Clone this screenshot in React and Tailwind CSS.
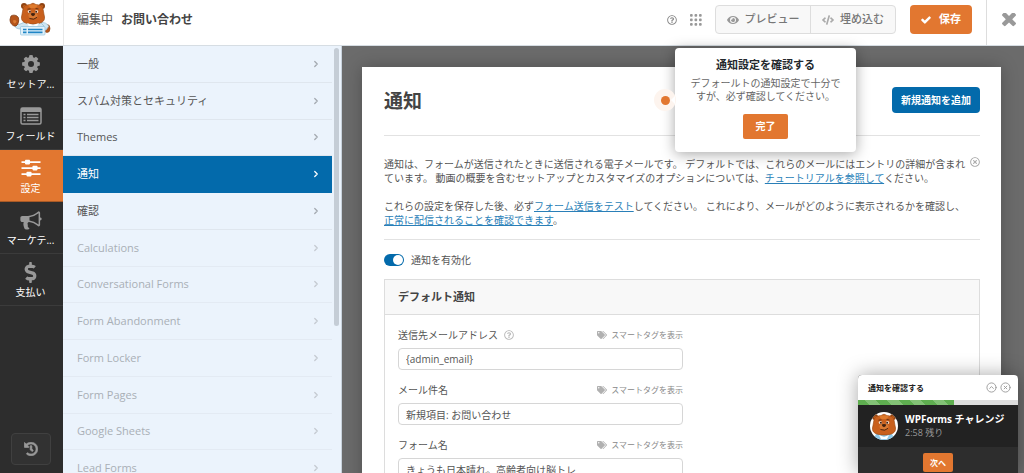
import React from "react";
import {
  FaCode,
  FaDollarSign,
  FaEye,
  FaHistory,
  FaRegQuestionCircle,
  FaRegTimesCircle,
  FaTags,
} from "react-icons/fa";
import { ChevronRight, CircleChevronUp, CircleX } from "lucide-react";

function BearHead() {
  return (
    <g>
      <circle cx="24" cy="6" r="3" fill="#8f4312" />
      <circle cx="42" cy="6" r="3" fill="#8f4312" />
      <circle cx="24.5" cy="6.5" r="1.6" fill="#c9651f" />
      <circle cx="41.5" cy="6.5" r="1.6" fill="#c9651f" />
      <path
        d="M24 6.5C26 4.5 29 5 31 4.2C32 3 34 3 35 4.2C37 5 40 4.500 42 6.500C43.500 9 43.500 13 44.500 17C45 21.500 41 24 33 24S21 21.500 21.500 17C22.500 13 22.500 9 24 6.500Z"
        fill="#c9601d"
        stroke="#a04d16"
        strokeWidth=".7"
      />
      <path d="M28 5.500C30 4 36 4 38 5.500L35.500 8H30.500Z" fill="#de7a2c" />
      <ellipse cx="33" cy="15.500" rx="4.500" ry="3" fill="#d97a33" />
      <ellipse cx="29.400" cy="11.500" rx="1.600" ry="1.500" fill="#f3e3d6" />
      <ellipse cx="36.600" cy="11.500" rx="1.600" ry="1.500" fill="#f3e3d6" />
      <circle cx="29.900" cy="11.700" r="1" fill="#40200f" />
      <circle cx="36.200" cy="11.700" r="1" fill="#40200f" />
      <path d="M27.500 9.200L30.500 8.800M35.500 8.400L38.500 9" stroke="#60300f" strokeWidth=".9" />
      <path d="M30.700 13.500Q33 12.400 35.300 13.500Q35 15.700 33 16.200Q31 15.700 30.700 13.500Z" fill="#40200f" />
      <path d="M29.500 18.500Q34 20.500 37 17.300" fill="none" stroke="#40200f" strokeWidth=".9" />
    </g>
  );
}

function Mascot({ className }) {
  return (
    <svg viewBox="9 2 42 34" className={className} aria-hidden="true">
      <ellipse cx="47" cy="28.500" rx="3" ry="4" fill="#b5551b" stroke="#8f4312" strokeWidth=".6" />
      <path d="M40 22.500C45 22 48 24 48.500 26.500L46 30H40Z" fill="#cfe6f2" stroke="#9cc4d8" strokeWidth=".7" />
      <path d="M17 24.500C20 25 22 22.500 26 22H40L44 26V33H21V29C17 29 15 27.500 14.500 25.500Z" fill="#cfe6f2" stroke="#8fb9cf" strokeWidth=".7" />
      <path
        d="M11 16C13 14.500 17 15 18.300 17.500C19.300 20.500 18.500 24.500 16 26C12.500 26.500 10 23 10 19.500Z"
        fill="#b5551b"
        stroke="#7d3a12"
        strokeWidth=".8"
      />
      <path d="M13 20.500Q14.500 19.300 16 20.500T14.500 23.500Q12.800 22.500 13 20.500Z" fill="#d97a33" />
      <BearHead />
      <path d="M27 23L33 25L39 23L37 26.500L33 25.500L29 26.500Z" fill="#fff" />
      <rect x="20.500" y="26.500" width="24.500" height="8.500" rx="1" fill="#e2f1fa" stroke="#8fc3de" strokeWidth=".7" />
      <path d="M23 29.500H26.500M28 29.500H42.500M23 32.300H26.500M28 32.300H42.500" stroke="#1f86c6" strokeWidth="1.700" />
    </svg>
  );
}

function CogIcon() {
  return (
    <svg viewBox="0 0 18 18" className="size-[18px]" aria-hidden="true">
      {[0, 45, 90, 135].map((angle) => (
        <g key={angle} transform={`rotate(${angle} 9 9)`} fill="currentColor">
          <path d="M7.300 0.300Q9 -0.100 10.700 0.300L11.300 4H6.700ZM7.300 17.700Q9 18.100 10.700 17.700L11.300 14H6.700Z" />
        </g>
      ))}
      <circle cx="9" cy="9" r="5" fill="none" stroke="currentColor" strokeWidth="4" />
    </svg>
  );
}

function ListIcon() {
  return (
    <svg viewBox="0 0 22 18" className="h-[18px] w-[22px]" fill="none" stroke="currentColor" aria-hidden="true">
      <rect x="1" y="1" width="20" height="16" rx="1.500" strokeWidth="1.500" />
      <path d="M1 3H21" strokeWidth="4" />
      <path d="M3.500 7.500H5.500M7 7.500H18.500M3.500 10.500H5.500M7 10.500H18.500M3.500 13.500H5.500M7 13.500H18.500" strokeWidth="1.600" />
    </svg>
  );
}

function SlidersIcon() {
  return (
    <svg viewBox="0 0 20 18" className="h-[18px] w-5" fill="currentColor" aria-hidden="true">
      <path d="M0.500 2.200H19.500V4H0.500ZM0.500 8.200H19.500V10H0.500ZM0.500 14.200H19.500V16H0.500Z" />
      <rect x="4" y="0.800" width="5" height="4.600" rx=".8" />
      <rect x="11.500" y="6.800" width="5" height="4.600" rx=".8" />
      <rect x="5.500" y="12.800" width="5" height="4.600" rx=".8" />
    </svg>
  );
}

function BullhornIcon() {
  return (
    <svg viewBox="0 100 1792 1600" className="h-[19px] w-[22px]" fill="currentColor" aria-hidden="true">
      <path d="M1664 640q53 0 90.500 37.500t37.500 90.500-37.500 90.500-90.500 37.500v384q0 52-38 90t-90 38q-417-347-812-380-58 19-91 66t-31 100.500 40 92.500q-20 33-23 65.500t6 58 33.500 55 48 50 61.500 50.500q-29 58-111.500 83t-168.500 11.500-132-55.500q-7-23-29.500-87.500t-32-94.500-23-89-15-101 3.500-98.500 22-110.500h-122q-66 0-113-47t-47-113v-192q0-66 47-113t113-47h480q435 0 896-384 52 0 90 38t38 90v384zm-128 604v-954q-394 302-768 343v270q377 42 768 341z" />
    </svg>
  );
}

function CheckIcon() {
  return (
    <svg viewBox="100 300 1600 1250" className="h-2 w-2.5" fill="currentColor" aria-hidden="true">
      <path d="M1671 566q0 40-28 68l-724 724-136 136q-28 28-68 28t-68-28l-136-136-362-362q-28-28-28-68t28-68l136-136q28-28 68-28t68 28l294 295 656-657q28-28 68-28t68 28l136 136q28 28 28 68z" />
    </svg>
  );
}

function CloseIcon() {
  return (
    <svg viewBox="300 434 1190 1190" className="size-[14px]" fill="currentColor" aria-hidden="true">
      <path d="M1490 1322q0 40-28 68l-136 136q-28 28-68 28t-68-28l-294-294-294 294q-28 28-68 28t-68-28l-136-136q-28-28-28-68t28-68l294-294-294-294q-28-28-28-68t28-68l136-136q28-28 68-28t68 28l294 294 294-294q28-28 68-28t68 28l136 136q28 28 28 68t-28 68l-294 294 294 294q28 28 28 68z" />
    </svg>
  );
}

function DotsIcon() {
  return (
    <svg viewBox="0 0 12 12" className="size-3" fill="currentColor" aria-hidden="true">
      {[0, 4.5, 9].map((y) =>
        [0, 4.5, 9].map((x) => <rect key={`${x}-${y}`} x={x} y={y} width="2.700" height="2.700" rx=".9" />)
      )}
    </svg>
  );
}

const NAV = [
  { label: "セットア...", icon: <CogIcon /> },
  { label: "フィールド", icon: <ListIcon /> },
  { label: "設定", icon: <SlidersIcon />, active: true },
  { label: "マーケテ...", icon: <BullhornIcon /> },
  { label: "支払い", icon: <FaDollarSign className="size-[21px]" /> },
];

const SECTIONS = [
  { label: "一般" },
  { label: "スパム対策とセキュリティ" },
  { label: "Themes" },
  { label: "通知", active: true },
  { label: "確認" },
  { label: "Calculations", muted: true },
  { label: "Conversational Forms", muted: true },
  { label: "Form Abandonment", muted: true },
  { label: "Form Locker", muted: true },
  { label: "Form Pages", muted: true },
  { label: "Google Sheets", muted: true },
  { label: "Lead Forms", muted: true },
];

const FIELDS = [
  { id: "email", label: "送信先メールアドレス", value: "{admin_email}", help: true },
  { id: "subject", label: "メール件名", value: "新規項目: お問い合わせ" },
  { id: "from", label: "フォーム名", value: "きょうも日本晴れ。高齢者向け脳トレ" },
];

function Header() {
  return (
    <header className="flex h-[46px] shrink-0 items-stretch border-b border-[#d6dde3] bg-white">
      <div className="flex w-16 shrink-0 border-r border-[#e8e8e8] pl-[9px] pt-0.5">
        <Mascot className="h-[34px] w-[42px]" />
      </div>
      <h1 className="flex flex-1 items-center gap-2 pb-1.5 pl-[13px] text-[12px] text-[#555]">
        編集中 <strong className="font-bold text-[#444]">お問い合わせ</strong>
      </h1>
      <div className="flex items-center pb-1.5 text-[11px] font-medium text-[#777]">
        <button type="button" aria-label="ヘルプ" className="mr-[13px] text-[#8c8c8c]">
          <FaRegQuestionCircle className="size-2.5" />
        </button>
        <button type="button" aria-label="メニュー" className="mr-[13px] text-[#999]">
          <DotsIcon />
        </button>
        <div className="flex h-[29px] rounded-sm border border-[#ddd] bg-[#f8f8f8]">
          <button type="button" className="flex w-[95px] items-center justify-center gap-1.5 border-r border-[#ddd]">
            <FaEye className="size-3 text-[#999]" />
            プレビュー
          </button>
          <button type="button" className="flex w-[84px] items-center justify-center gap-1.5">
            <FaCode className="size-3 text-[#aaa]" />
            埋め込む
          </button>
        </div>
        <button
          type="button"
          className="ml-3.5 flex h-[29px] w-[62px] items-center justify-center gap-2 rounded-sm bg-[#e27730] font-bold text-white"
        >
          <CheckIcon />
          保存
        </button>
      </div>
      <div className="ml-3.5 flex w-[38px] items-center justify-center border-l border-[#ddd] pb-1.5 pl-1.5">
        <button type="button" aria-label="閉じる" className="text-[#999]">
          <CloseIcon />
        </button>
      </div>
    </header>
  );
}

function Sidebar() {
  return (
    <nav className="flex w-[63px] shrink-0 flex-col bg-[#2d2d2d]">
      {NAV.map((item) => (
        <button
          key={item.label}
          type="button"
          className={`flex h-[52px] shrink-0 flex-col items-center justify-between border-b pb-[5px] pr-0.5 pt-[9px] text-[10px] leading-4 ${
            item.active ? "border-[#a95a26] bg-[#e27730] text-white" : "border-[#3b3b3b] text-[#999]"
          }`}
        >
          <span className="flex h-[18px] items-center">{item.icon}</span>
          <span className="whitespace-nowrap text-white">{item.label}</span>
        </button>
      ))}
      <button
        type="button"
        aria-label="履歴"
        className="mb-2 ml-[11px] mt-auto flex h-8 w-10 items-center justify-center rounded-sm border border-[#404040] bg-[#323232] text-[#999]"
      >
        <FaHistory className="size-3.5" stroke="currentColor" strokeWidth="24" />
      </button>
    </nav>
  );
}

function SettingsMenu() {
  return (
    <aside className="flex w-[279px] shrink-0 items-start overflow-hidden border-r border-[#c8d2dc] bg-[#ebf3fc]">
      <ul className="grid h-[441px] flex-1 auto-rows-fr">
        {SECTIONS.map((s) => (
          <li key={s.label} className="flex">
            <a
              href="#"
              className={`flex flex-1 items-center justify-between border-b pl-3.5 pr-[11px] text-[11px] leading-4 ${
                s.active
                  ? "border-[#036aab] bg-[#036aab] text-white"
                  : s.muted
                    ? "border-[#e3eaf3] text-[#a9afb6]"
                    : "border-[#dfe6ee] text-[#555]"
              }`}
            >
              {s.label}
              <ChevronRight
                strokeWidth={3}
                className={`size-2.5 ${s.active ? "" : s.muted ? "text-[#c4cad1]" : "text-[#a3a9b0]"}`}
              />
            </a>
          </li>
        ))}
      </ul>
      <div className="mx-0.5 mt-0.5 h-[278px] w-[5px] rounded-full bg-[#c5cdd6]" />
    </aside>
  );
}

function Field({ field }) {
  return (
    <div className="mb-3">
      <div className="mb-1.5 flex h-[15px] items-center justify-between">
        <div className="flex items-center gap-1.5">
          <label htmlFor={field.id}>{field.label}</label>
          {field.help && <FaRegQuestionCircle className="size-2.5 text-[#bbb]" />}
        </div>
        <button type="button" className="flex items-center gap-1 text-[8px] text-[#888]">
          <FaTags className="size-2.5 text-[#b0b0b0]" />
          スマートタグを表示
        </button>
      </div>
      <input
        id={field.id}
        type="text"
        defaultValue={field.value}
        className="block h-[22px] w-full rounded-sm border border-[#d6d6d6] bg-white px-[7px] text-[10px] text-[#555] outline-none"
      />
    </div>
  );
}

function Content() {
  return (
    <main className="flex-1 overflow-hidden bg-[#6b6b6b] pl-5 pr-[23px] pt-[21px]">
      <section className="bg-white pl-[22px] pr-[21px] pt-5 text-[10px] leading-[14px] text-[#555] shadow-[0_0_16px_rgba(0,0,0,0.25)]">
        <div className="flex items-start justify-between border-b border-[#e2e2e2] pb-5">
          <h2 className="text-[19px] font-bold leading-[28px] text-[#444]">通知</h2>
          <button type="button" className="h-[26px] rounded-sm bg-[#036aab] px-[9px] font-bold text-white">
            新規通知を追加
          </button>
        </div>
        <div className="flex items-start justify-between border-b border-[#e2e2e2] pb-3 pt-[21px]">
          <div>
            <p className="mb-3.5">
              通知は、フォームが送信されたときに送信される電子メールです。 デフォルトでは、これらのメールにはエントリの詳細が含まれ
              <br />
              ています。 動画の概要を含むセットアップとカスタマイズのオプションについては、
              <a href="#" className="text-[#2a7fb8] underline">チュートリアルを参照して</a>ください。
            </p>
            <p>
              これらの設定を保存した後、必ず
              <a href="#" className="text-[#2a7fb8] underline">フォーム送信をテスト</a>
              してください。 これにより、メールがどのように表示されるかを確認し、
              <br />
              <a href="#" className="text-[#2a7fb8] underline">正常に配信されることを確認できます</a>。
            </p>
          </div>
          <button type="button" aria-label="閉じる" className="flex shrink-0 text-[#aaa]">
            <FaRegTimesCircle className="size-2.5" />
          </button>
        </div>
        <label className="flex items-center gap-[7px] pb-3 pt-[13px]">
          <input type="checkbox" role="switch" defaultChecked className="peer sr-only" />
          <span className="flex h-3 w-5 items-center justify-end rounded-full bg-[#036aab] p-px">
            <span className="size-2.5 rounded-full bg-white" />
          </span>
          通知を有効化
        </label>
        <div className="border border-[#ddd]">
          <h3 className="border-b border-[#ddd] bg-[#f8f8f8] pl-[13px] text-[11px] font-bold leading-[34px] text-[#444]">
            デフォルト通知
          </h3>
          <div className="w-[298px] pl-[13px] pt-3">
            {FIELDS.map((f) => (
              <Field key={f.id} field={f} />
            ))}
          </div>
        </div>
      </section>
    </main>
  );
}

function Tooltip() {
  return (
    <div
      role="dialog"
      className="absolute right-[168px] top-12 flex w-[181px] flex-col items-center rounded-sm bg-white pb-[13px] pt-[9px] text-center text-[10px] leading-[13px] text-[#666] shadow-[0_2px_14px_rgba(0,0,0,0.35)]"
    >
      <span className="absolute -left-[21px] top-[41px] flex size-[22px] items-center justify-center rounded-full bg-[#fdf4ee]">
        <span className="size-[9px] rounded-full bg-[#e27730]" />
      </span>
      <span className="absolute -left-1 top-12 border-y-4 border-r-4 border-y-transparent border-r-white" />
      <h4 className="mb-1 text-[11px] font-bold leading-4 text-[#23282c]">通知設定を確認する</h4>
      <p className="mb-[11px] whitespace-nowrap">
        デフォールトの通知設定で十分で
        <br />
        すが、必ず確認してください。
      </p>
      <button type="button" className="h-[25px] w-[45px] rounded-xs bg-[#e27730] font-bold text-white">
        完了
      </button>
    </div>
  );
}

function Challenge() {
  return (
    <div className="absolute bottom-0 right-1.5 w-40 overflow-hidden rounded-t-sm bg-[#2d2d2d] shadow-[0_0_20px_rgba(0,0,0,0.35)]">
      <div className="flex h-[25px] items-center justify-between bg-white pl-2.5 pr-[7px] text-[8px] font-bold text-[#222]">
        通知を確認する
        <div className="flex gap-[3px] text-[#999]">
          <button type="button" aria-label="折りたたむ">
            <CircleChevronUp className="size-[11px]" strokeWidth={2} />
          </button>
          <button type="button" aria-label="閉じる">
            <CircleX className="size-[11px]" strokeWidth={2} />
          </button>
        </div>
      </div>
      <div className="h-[5px] bg-[#ddd]">
        <div className="h-full w-3/5 bg-[repeating-linear-gradient(45deg,#5fae50_0_8px,#83c276_8px_16px)]" />
      </div>
      <div className="flex h-[42px] items-center gap-[7px] bg-[#222] pl-3">
        <svg viewBox="19 1 28 28" className="size-7 rounded-full bg-white" aria-hidden="true">
          <path d="M22 29L25 23H41L44 29Z" fill="#8fcaea" />
          <BearHead />
          <path d="M28 24L33 26L38 24L36 28H30Z" fill="#fff" />
        </svg>
        <div className="leading-[14px]">
          <p className="whitespace-nowrap text-[10px] font-bold text-white">WPForms チャレンジ</p>
          <p className="text-[9px] text-[#999]">2:58 残り</p>
        </div>
      </div>
      <div className="flex h-[26px] justify-center pt-1.5">
        <button type="button" className="h-[19px] w-[30px] rounded-xs bg-[#e27730] text-[8px] font-bold text-white">
          次へ
        </button>
      </div>
    </div>
  );
}

export default function App() {
  return (
    <div className="relative flex h-screen flex-col overflow-hidden font-['Open_Sans','Noto_Sans_CJK_JP',sans-serif]" lang="ja">
      <Header />
      <div className="flex min-h-0 flex-1">
        <Sidebar />
        <SettingsMenu />
        <Content />
      </div>
      <Tooltip />
      <Challenge />
    </div>
  );
}
